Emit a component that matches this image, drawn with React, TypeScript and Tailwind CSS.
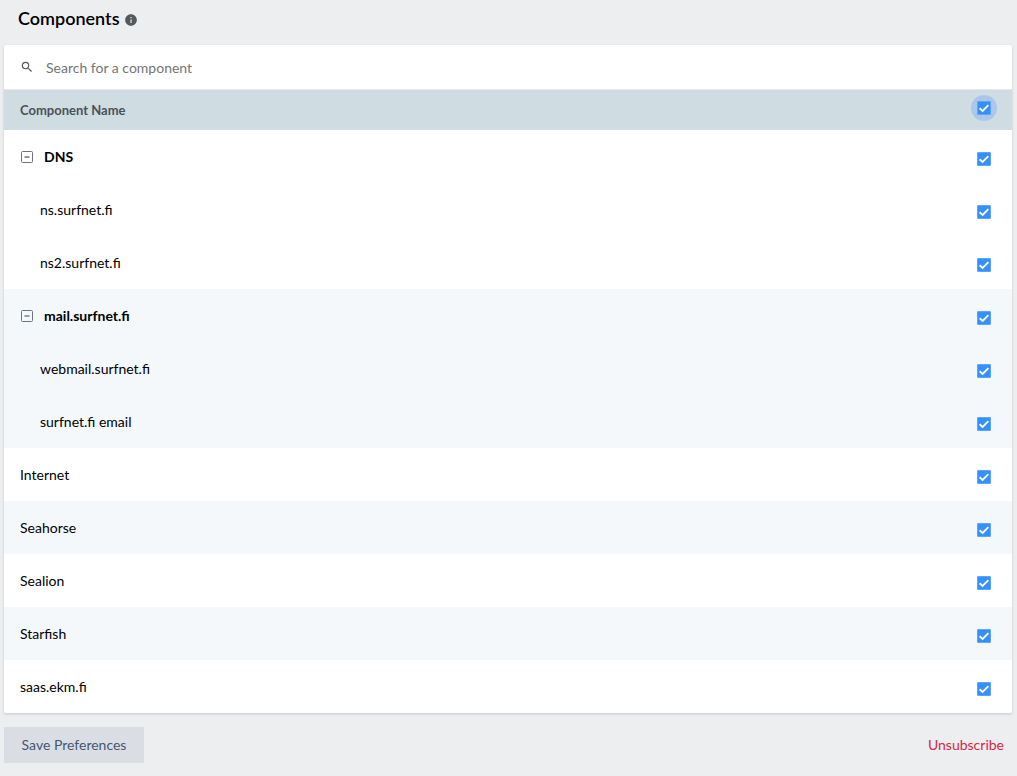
import { useState } from 'react';
import { MdInfo, MdSearch } from 'react-icons/md';

interface Group {
  name: string;
  children: string[];
}

const GROUPS: Group[] = [
  { name: 'DNS', children: ['ns.surfnet.fi', 'ns2.surfnet.fi'] },
  { name: 'mail.surfnet.fi', children: ['webmail.surfnet.fi', 'surfnet.fi email'] },
  { name: 'Internet', children: [] },
  { name: 'Seahorse', children: [] },
  { name: 'Sealion', children: [] },
  { name: 'Starfish', children: [] },
  { name: 'saas.ekm.fi', children: [] },
];

const ALL_NAMES = GROUPS.flatMap((g) => [g.name, ...g.children]);

interface CheckboxProps {
  label: string;
  checked: boolean;
  halo?: boolean;
  onChange: (checked: boolean) => void;
}

function Checkbox({ label, checked, halo, onChange }: CheckboxProps) {
  return (
    <label
      className={`relative inline-flex items-center justify-center size-[26px] rounded-full align-middle cursor-pointer ${
        halo ? 'bg-[#abc8ea]' : ''
      }`}
    >
      <input
        type="checkbox"
        aria-label={label}
        checked={checked}
        onChange={(e) => onChange(e.target.checked)}
        className="appearance-none size-3.5 rounded-[1px] border border-[#5ca5fb] bg-white checked:bg-[#3490ff]"
      />
      {checked && (
        <svg viewBox="0 0 14 14" className="absolute size-3.5 pointer-events-none" fill="none">
          <path d="M2.6 7.2 5.6 10 11.4 4.2" stroke="#fff" strokeWidth="1.9" />
        </svg>
      )}
    </label>
  );
}

function ToggleIcon({ open }: { open: boolean }) {
  return (
    <svg viewBox="0 0 14 14" className="size-3.5" fill="none" stroke="#6b7480">
      <rect x="1.5" y="1.5" width="11" height="11" rx="1" />
      <path d="M4.5 7h5" strokeWidth="1.4" />
      {!open && <path d="M7 4.5v5" strokeWidth="1.4" />}
    </svg>
  );
}

export default function App() {
  const [query, setQuery] = useState('');
  const [selected, setSelected] = useState<string[]>(ALL_NAMES);
  const [collapsed, setCollapsed] = useState<string[]>([]);

  const setChecked = (names: string[], checked: boolean) => {
    setSelected((prev) => {
      const rest = prev.filter((n) => !names.includes(n));
      return checked ? [...rest, ...names] : rest;
    });
  };

  const toggleGroup = (name: string) => {
    setCollapsed((prev) => (prev.includes(name) ? prev.filter((n) => n !== name) : [...prev, name]));
  };

  const matches = (name: string) => name.toLowerCase().includes(query.trim().toLowerCase());
  const visible = GROUPS.filter((g) => matches(g.name) || g.children.some(matches));

  return (
    <div className="min-h-screen bg-[#edeef0] pl-1 pr-[5px] pb-[13px] text-sm text-black font-[Lato,sans-serif]">
      <div className="flex items-center gap-1 h-[45px] px-3.5 pb-2.5">
        <h1 className="text-lg font-semibold">Components</h1>
        <MdInfo className="size-3.5 mt-1 text-[#55585c]" />
      </div>

      <div className="bg-white rounded-xs shadow-[0_1px_3px_rgba(0,0,0,0.16)] overflow-hidden">
        {/* Search */}
        <div className="flex items-center gap-3 h-[45px] px-4 border-b border-[#e4e8eb]">
          <MdSearch className="size-3.5 text-[#55585c]" />
          <input
            type="text"
            aria-label="Search for a component"
            value={query}
            onChange={(e) => setQuery(e.target.value)}
            placeholder="Search for a component"
            className="flex-1 pt-0.5 outline-none placeholder:text-[#757575]"
          />
        </div>

        <table className="w-full text-left">
          <thead className="bg-[#cfdce2]">
            <tr className="h-10">
              <th className="pl-4 text-[13px] font-bold text-[#4a5157]">Component Name</th>
              <th className="w-14 pr-[15px] pb-1 text-right">
                <Checkbox
                  label="Select all components"
                  halo
                  checked={selected.length === ALL_NAMES.length}
                  onChange={(checked) => setChecked(ALL_NAMES, checked)}
                />
              </th>
            </tr>
          </thead>
          {visible.map((group) => {
            const hasChildren = group.children.length > 0;
            const open = !collapsed.includes(group.name);
            return (
              <tbody key={group.name} className="odd:bg-[#f4f8fb]">
                <tr className="h-[53px]">
                  <td className="pl-4">
                    {hasChildren ? (
                      <div className="flex items-center gap-2.5">
                        <button
                          type="button"
                          aria-label={`Toggle ${group.name}`}
                          aria-expanded={open}
                          onClick={() => toggleGroup(group.name)}
                        >
                          <ToggleIcon open={open} />
                        </button>
                        <span className="font-bold">{group.name}</span>
                      </div>
                    ) : (
                      group.name
                    )}
                  </td>
                  <td className="w-14 pr-[15px] pt-1 text-right">
                    <Checkbox
                      label={group.name}
                      checked={selected.includes(group.name)}
                      onChange={(checked) => setChecked([group.name, ...group.children], checked)}
                    />
                  </td>
                </tr>
                {open &&
                  group.children.map((child) => (
                    <tr key={child} className="h-[53px]">
                      <td className="pl-9">{child}</td>
                      <td className="w-14 pr-[15px] pt-1 text-right">
                        <Checkbox
                          label={child}
                          checked={selected.includes(child)}
                          onChange={(checked) => setChecked([child], checked)}
                        />
                      </td>
                    </tr>
                  ))}
              </tbody>
            );
          })}
        </table>
      </div>

      <div className="flex items-center justify-between mt-3.5">
        <button type="button" className="min-w-35 h-9 px-4 rounded-[1px] bg-[#dadee4] text-[#465672]">
          Save Preferences
        </button>
        <button type="button" className="h-9 px-2 text-[#d92546]">
          Unsubscribe
        </button>
      </div>
    </div>
  );
}
